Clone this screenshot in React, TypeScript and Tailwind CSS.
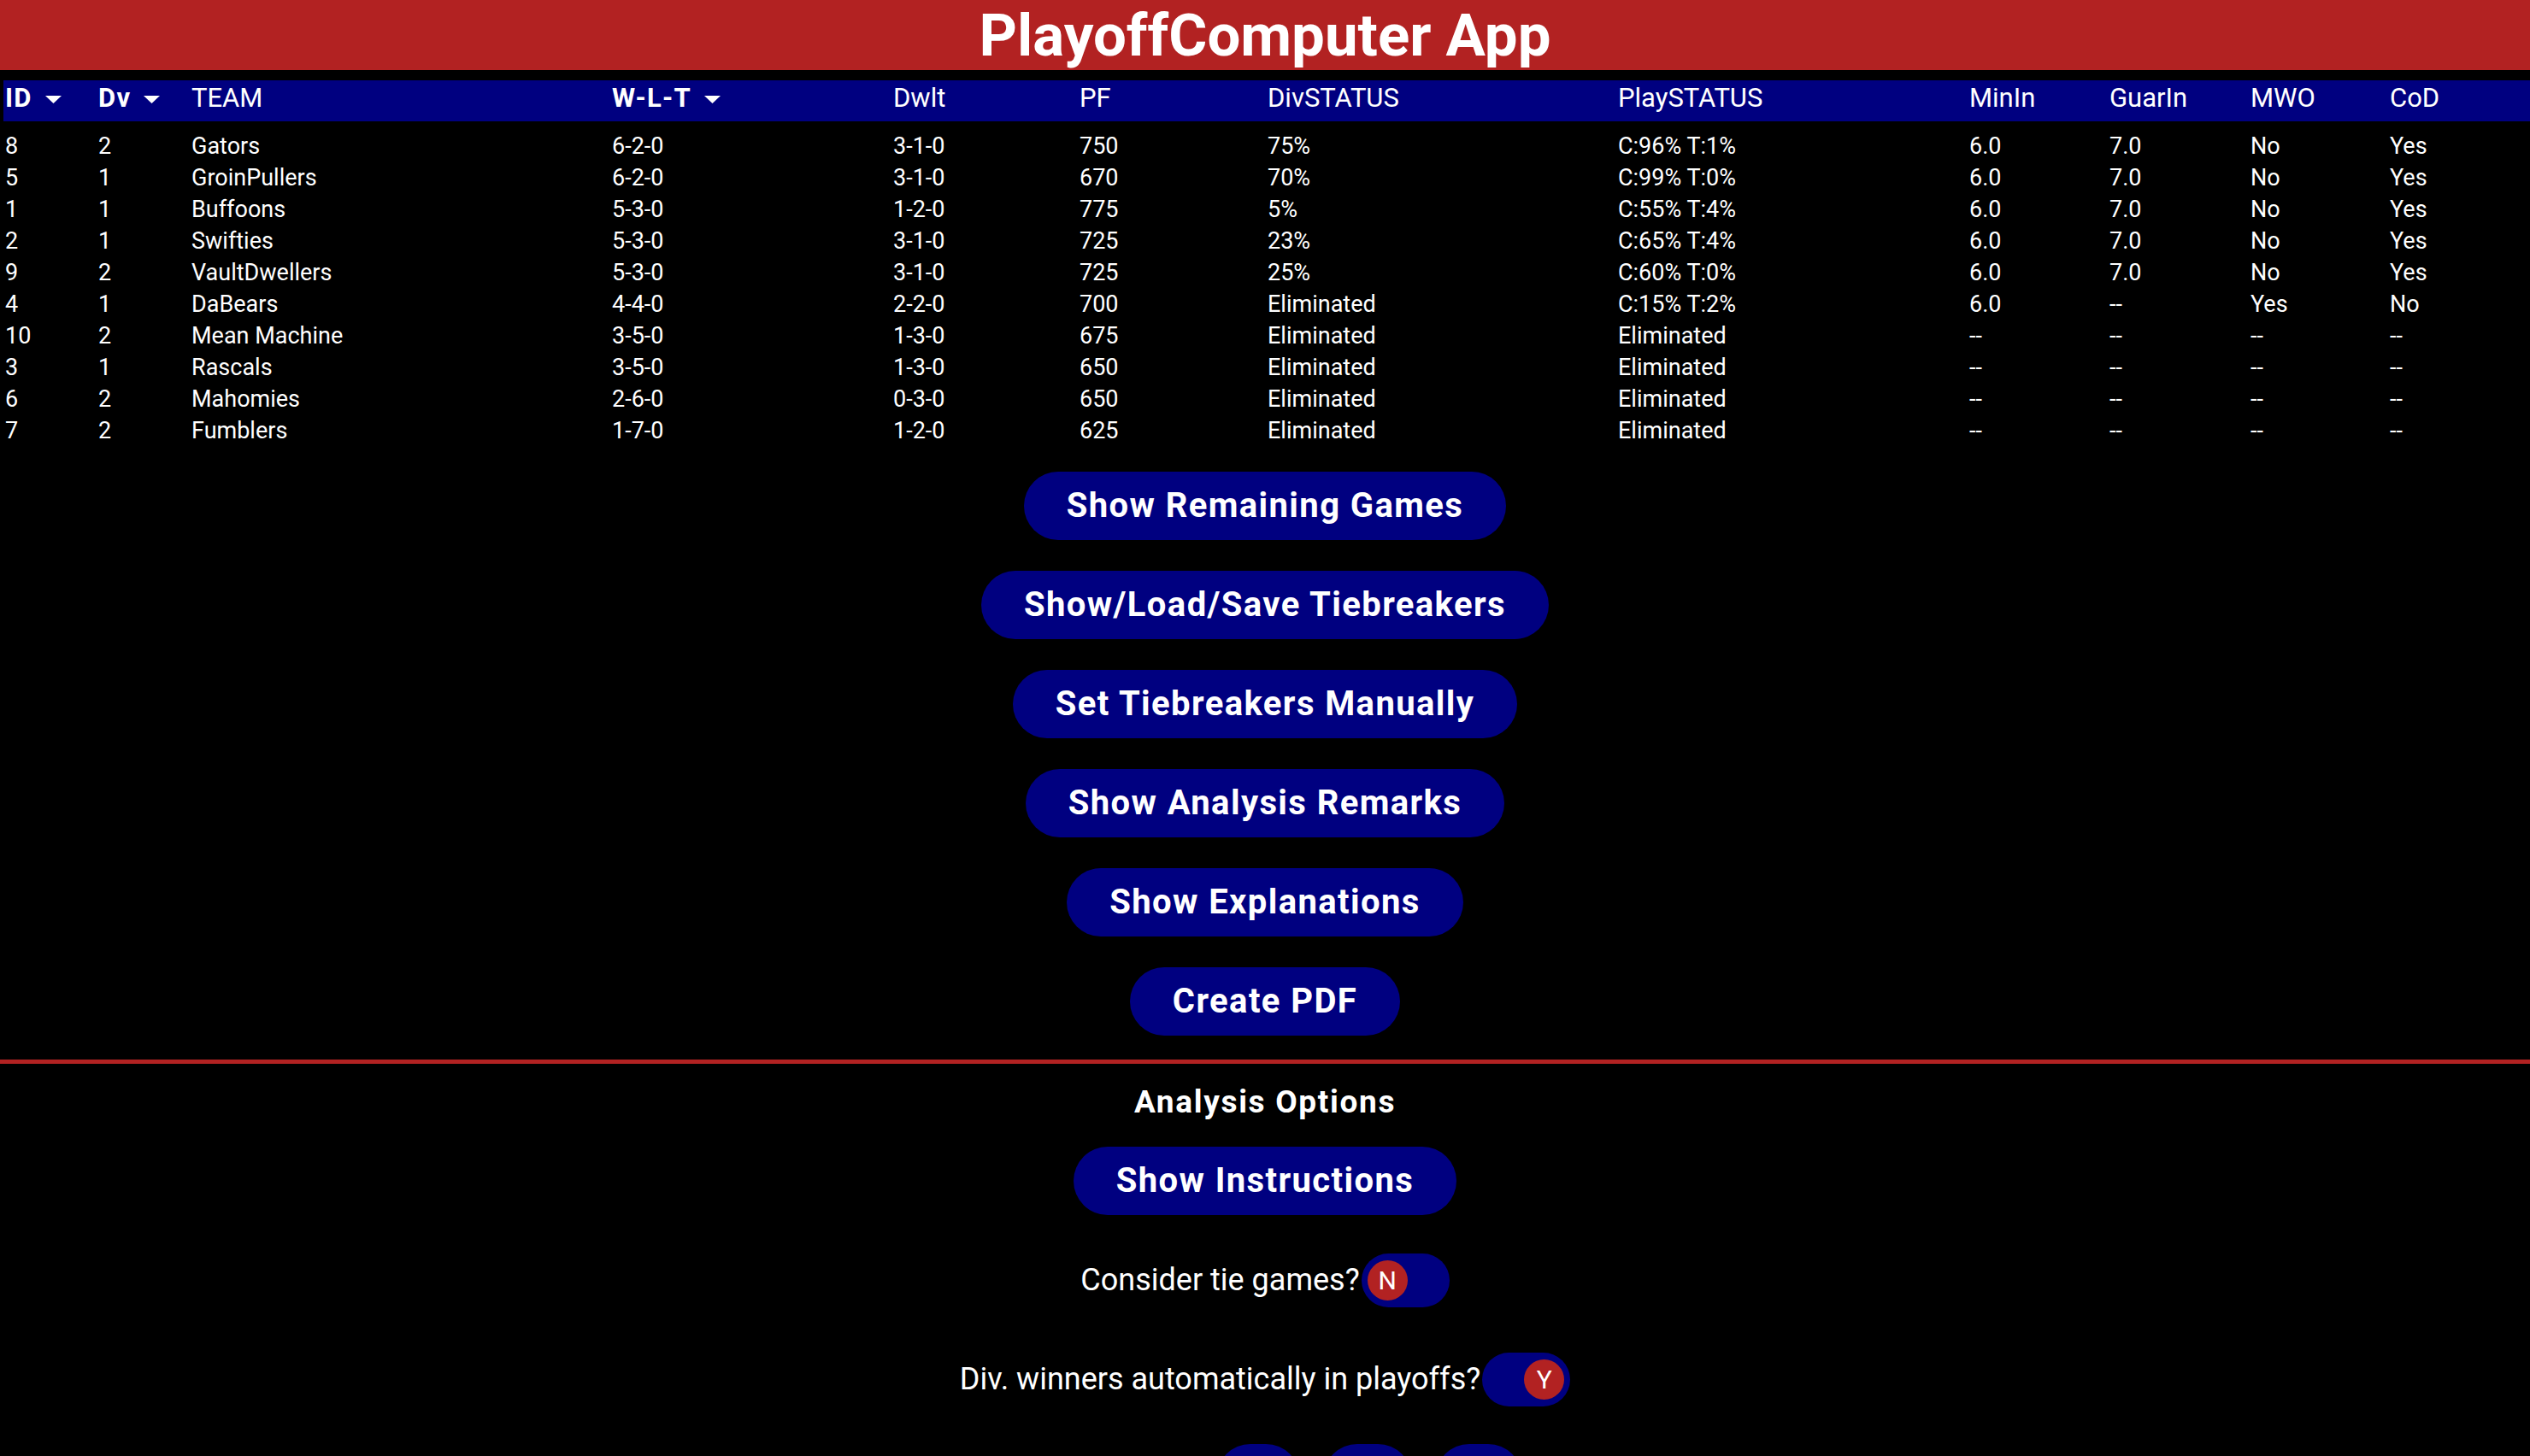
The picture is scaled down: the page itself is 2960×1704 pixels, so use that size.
import { useState } from 'react';

type TeamRow = {
  id: number
  dv: number
  name: string
  wlt: string
  dwlt: string
  pf: number
  divStatus: string
  playStatus: string
  minIn: string
  guarIn: string
  mwo: string
  cod: string
}

const teams: TeamRow[] = [
  { id: 8, dv: 2, name: 'Gators', wlt: '6-2-0', dwlt: '3-1-0', pf: 750, divStatus: '75%', playStatus: 'C:96% T:1%', minIn: '6.0', guarIn: '7.0', mwo: 'No', cod: 'Yes' },
  { id: 5, dv: 1, name: 'GroinPullers', wlt: '6-2-0', dwlt: '3-1-0', pf: 670, divStatus: '70%', playStatus: 'C:99% T:0%', minIn: '6.0', guarIn: '7.0', mwo: 'No', cod: 'Yes' },
  { id: 1, dv: 1, name: 'Buffoons', wlt: '5-3-0', dwlt: '1-2-0', pf: 775, divStatus: '5%', playStatus: 'C:55% T:4%', minIn: '6.0', guarIn: '7.0', mwo: 'No', cod: 'Yes' },
  { id: 2, dv: 1, name: 'Swifties', wlt: '5-3-0', dwlt: '3-1-0', pf: 725, divStatus: '23%', playStatus: 'C:65% T:4%', minIn: '6.0', guarIn: '7.0', mwo: 'No', cod: 'Yes' },
  { id: 9, dv: 2, name: 'VaultDwellers', wlt: '5-3-0', dwlt: '3-1-0', pf: 725, divStatus: '25%', playStatus: 'C:60% T:0%', minIn: '6.0', guarIn: '7.0', mwo: 'No', cod: 'Yes' },
  { id: 4, dv: 1, name: 'DaBears', wlt: '4-4-0', dwlt: '2-2-0', pf: 700, divStatus: 'Eliminated', playStatus: 'C:15% T:2%', minIn: '6.0', guarIn: '--', mwo: 'Yes', cod: 'No' },
  { id: 10, dv: 2, name: 'Mean Machine', wlt: '3-5-0', dwlt: '1-3-0', pf: 675, divStatus: 'Eliminated', playStatus: 'Eliminated', minIn: '--', guarIn: '--', mwo: '--', cod: '--' },
  { id: 3, dv: 1, name: 'Rascals', wlt: '3-5-0', dwlt: '1-3-0', pf: 650, divStatus: 'Eliminated', playStatus: 'Eliminated', minIn: '--', guarIn: '--', mwo: '--', cod: '--' },
  { id: 6, dv: 2, name: 'Mahomies', wlt: '2-6-0', dwlt: '0-3-0', pf: 650, divStatus: 'Eliminated', playStatus: 'Eliminated', minIn: '--', guarIn: '--', mwo: '--', cod: '--' },
  { id: 7, dv: 2, name: 'Fumblers', wlt: '1-7-0', dwlt: '1-2-0', pf: 625, divStatus: 'Eliminated', playStatus: 'Eliminated', minIn: '--', guarIn: '--', mwo: '--', cod: '--' },
]

const gridCols = 'grid grid-cols-[109px_109px_492px_329px_218px_220px_410px_411px_164px_165px_163px_1fr]'

const Caret = () => (
  <svg className="inline-block ml-[15px] mb-[1px]" width="19" height="9" viewBox="0 0 19 9">
    <polygon points="0,0 19,0 9.5,9" fill="white" />
  </svg>
)

const SortHeader = ({ label }: { label: string }) => (
  <div className="pl-[2px] font-bold tracking-[0.04em] whitespace-nowrap">
    {label}
    <Caret />
  </div>
)

const PlainHeader = ({ label }: { label: string }) => (
  <div className="pl-[2px] whitespace-nowrap">{label}</div>
)

const StandingsTable = () => (
  <div className="ml-[4px] mt-[12px]">
    <div className={`${gridCols} h-[48px] pt-[2px] bg-[#000080] text-[31px] leading-[normal] text-white`}>
      <SortHeader label="ID" />
      <SortHeader label="Dv" />
      <PlainHeader label="TEAM" />
      <SortHeader label="W-L-T" />
      <PlainHeader label="Dwlt" />
      <PlainHeader label="PF" />
      <PlainHeader label="DivSTATUS" />
      <PlainHeader label="PlaySTATUS" />
      <PlainHeader label="MinIn" />
      <PlainHeader label="GuarIn" />
      <PlainHeader label="MWO" />
      <PlainHeader label="CoD" />
    </div>
    <div className="pt-[11px]">
      {teams.map(team => (
        <div key={team.id} className={`${gridCols} h-[37px] text-[27px] leading-[37px] text-white`}>
          <div className="pl-[2px]">{team.id}</div>
          <div className="pl-[2px]">{team.dv}</div>
          <div className="pl-[2px]">{team.name}</div>
          <div className="pl-[2px]">{team.wlt}</div>
          <div className="pl-[2px]">{team.dwlt}</div>
          <div className="pl-[2px]">{team.pf}</div>
          <div className="pl-[2px]">{team.divStatus}</div>
          <div className="pl-[2px]">{team.playStatus}</div>
          <div className="pl-[2px]">{team.minIn}</div>
          <div className="pl-[2px]">{team.guarIn}</div>
          <div className="pl-[2px]">{team.mwo}</div>
          <div className="pl-[2px]">{team.cod}</div>
        </div>
      ))}
    </div>
  </div>
)

const PillButton = ({ label }: { label: string }) => (
  <button
    type="button"
    className="h-[80px] px-[50px] rounded-full bg-[#000080] text-white text-[40px] font-bold tracking-[0.035em] whitespace-nowrap"
  >
    {label}
  </button>
)

type ToggleProps = {
  label: string
  on: boolean
  onToggle: () => void
}

const YesNoToggle = ({ label, on, onToggle }: ToggleProps) => (
  <div className="h-[80px] flex items-center">
    <span className="text-[36px] text-white">{label}</span>
    <button
      type="button"
      onClick={onToggle}
      className={`ml-[2px] w-[103px] h-[63px] rounded-full bg-[#000080] flex items-center px-[7px] ${on ? 'justify-end' : 'justify-start'}`}
    >
      <span className="w-[47px] h-[47px] rounded-full bg-[#b22222] flex items-center justify-center text-[30px] text-white">
        {on ? 'Y' : 'N'}
      </span>
    </button>
  </div>
)

const App = () => {
  const [considerTies, setConsiderTies] = useState<boolean>(false)
  const [divWinnersIn, setDivWinnersIn] = useState<boolean>(true)
  const [week, setWeek] = useState<number>(1)

  return (
    <div className="min-h-screen bg-black text-white font-[Roboto,sans-serif] pb-[200px]">
      <header className="h-[82px] bg-[#b22222] flex items-center justify-center">
        <h1 className="text-[69px] leading-none font-bold text-white">PlayoffComputer App</h1>
      </header>

      <StandingsTable />

      <section className="mt-[29px] flex flex-col items-center gap-[36px]">
        <PillButton label="Show Remaining Games" />
        <PillButton label="Show/Load/Save Tiebreakers" />
        <PillButton label="Set Tiebreakers Manually" />
        <PillButton label="Show Analysis Remarks" />
        <PillButton label="Show Explanations" />
        <PillButton label="Create PDF" />
      </section>

      <div className="mt-[28px] h-[5px] bg-[#b22222]" />

      <section className="flex flex-col items-center">
        <h2 className="mt-[24px] text-[37px] leading-[42px] font-bold tracking-[0.045em]">Analysis Options</h2>
        <div className="mt-[31px] flex flex-col items-center gap-[36px]">
          <PillButton label="Show Instructions" />
          <YesNoToggle
            label="Consider tie games?"
            on={considerTies}
            onToggle={() => setConsiderTies(!considerTies)}
          />
          <YesNoToggle
            label="Div. winners automatically in playoffs?"
            on={divWinnersIn}
            onToggle={() => setDivWinnersIn(!divWinnersIn)}
          />
          {/* week picker, only the tops of the pills are on screen */}
          <div className="h-[80px] flex items-center gap-[27px] pl-[243px]">
            <button type="button" aria-label="week 1" onClick={() => setWeek(1)} className={`w-[98px] h-[80px] rounded-full ${week === 1 ? 'bg-[#000080]' : 'bg-[#000080]'}`} />
            <button type="button" aria-label="week 2" onClick={() => setWeek(2)} className="w-[104px] h-[80px] rounded-full bg-[#000080]" />
            <button type="button" aria-label="week 3" onClick={() => setWeek(3)} className="w-[102px] h-[80px] rounded-full bg-[#000080]" />
          </div>
        </div>
      </section>
    </div>
  )
}

export default App
